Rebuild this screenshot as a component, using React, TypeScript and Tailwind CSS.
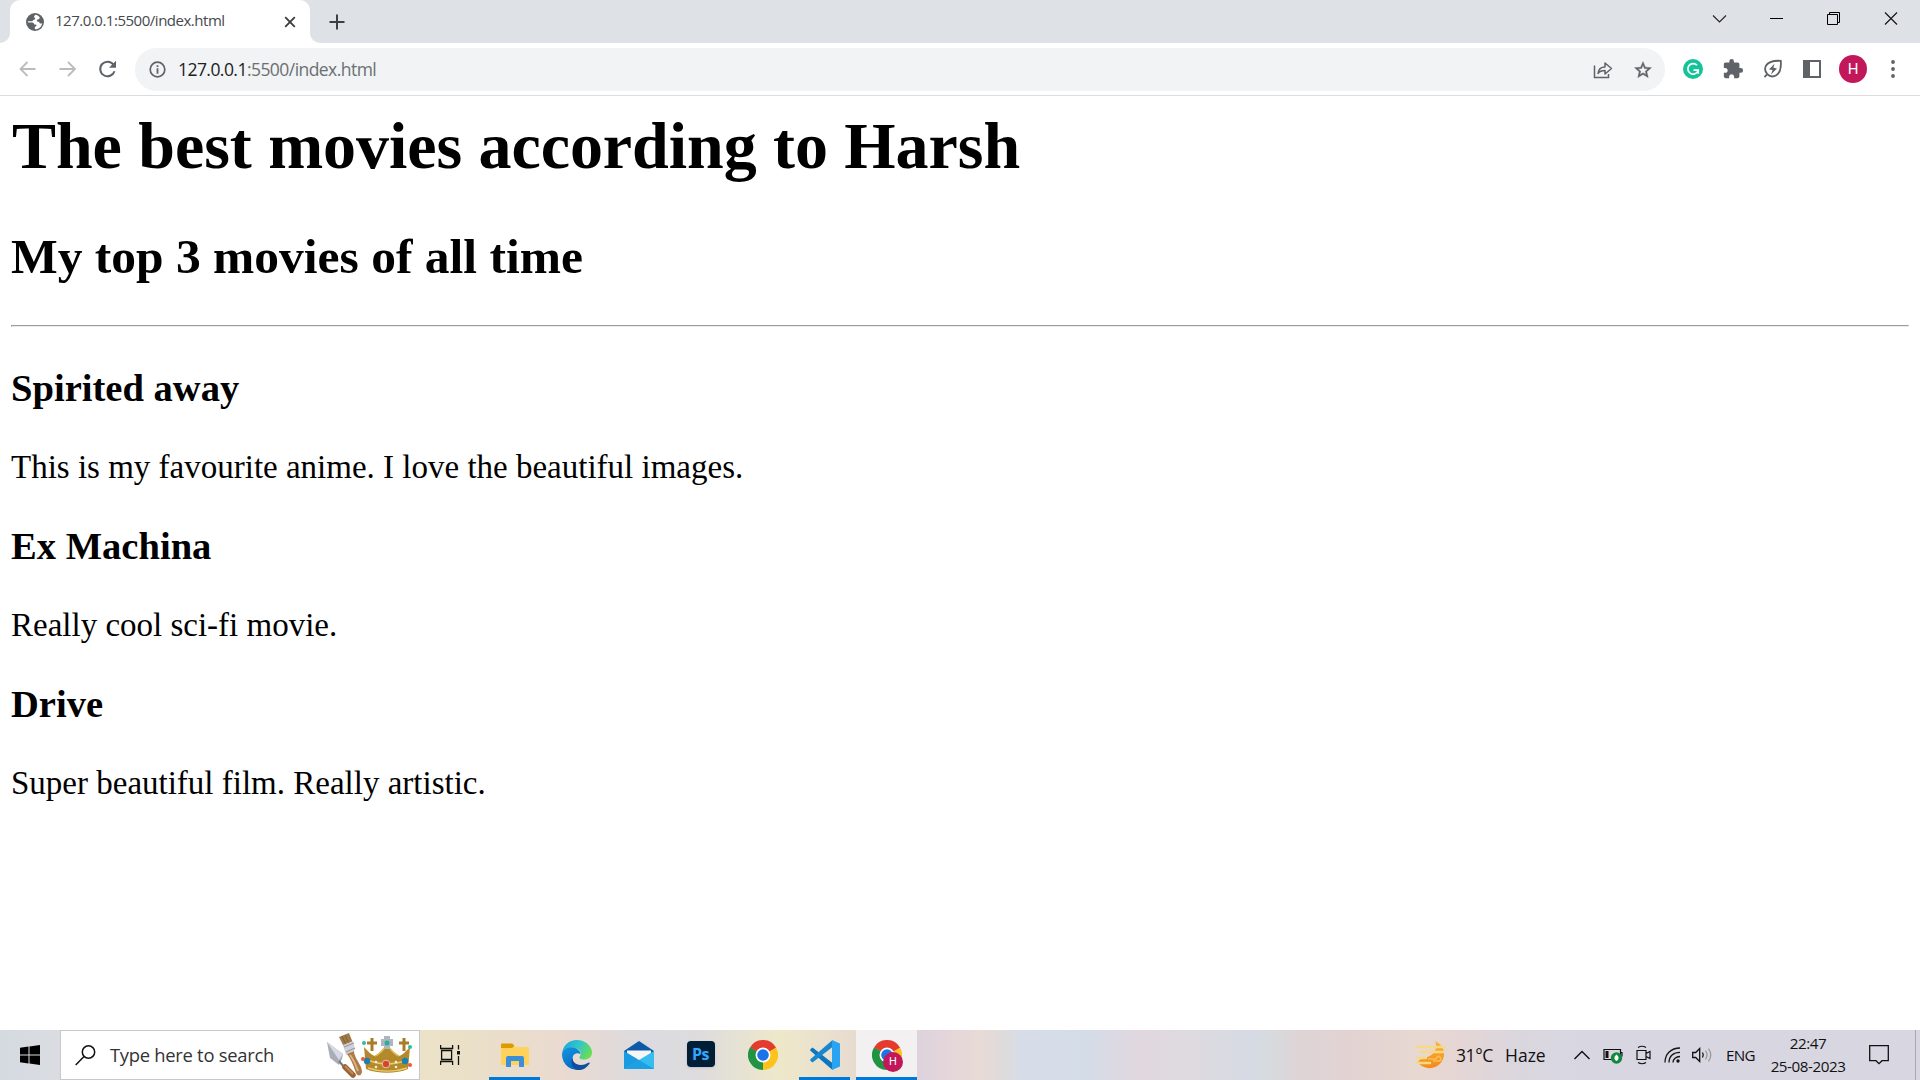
import React from 'react';

const PAGE_FONT = "font-['Liberation_Serif',serif]";

function Globe() {
  return (
    <svg width="18" height="18" viewBox="0 0 18 18">
      <circle cx="9" cy="9" r="9" fill="#5f6368" />
      <path d="M9.6 1.8c-1.7.8-2 2.4-.8 3.1 1 .6.3 1.8-.9 1.8-1 0-.8 1.5-2 1.5H2.2c-.6 0-.7 1 .3 1.2h3.7c1.500 0 1.900 1 1.900 2h1.600c1 0 1 1.600.2 1.900-1.300.5-1.400 2-.7 2.900 3.500.2 6.500-2.500 7-6-1.200.8-2.500.4-2.800-.8-.3-1.100-2.300-.3-2.500-1.600-.2-1.200 1.200-1.600 2-1.900.8-.3 1-1.300.5-2-1-1.200-2.400-2-3.800-2.100z" fill="#fff" />
    </svg>
  );
}

function ChromeIcon() {
  return (
    <svg width="30" height="30" viewBox="0 0 48 48">
      <path d="M24 24 L3.200 12 A24 24 0 0 1 44.800 12 Z" fill="#e33b2e" />
      <path d="M24 24 L44.800 12 A24 24 0 0 1 24 48 Z" fill="#fcc31e" />
      <path d="M24 24 L24 48 A24 24 0 0 1 3.200 12 Z" fill="#229342" />
      <path d="M24 12H44.800L34.400 18Z" fill="#e33b2e" />
      <path d="M34.400 30L24 48L24 36Z" fill="#fcc31e" />
      <path d="M13.600 30L3.200 12L13.600 18Z" fill="#229342" />
      <circle cx="24" cy="24" r="12" fill="#fff" />
      <circle cx="24" cy="24" r="9.300" fill="#1a73e8" />
    </svg>
  );
}

function TabStrip() {
  return (
    <header className="flex h-[43px] items-end bg-[#dee1e6]">
      <div className="h-[43px] w-[10px] bg-white">
        <div className="h-full rounded-br-[10px] bg-[#dee1e6]" />
      </div>
      <div className="flex h-[43px] w-[300px] items-center rounded-t-[10px] bg-white pl-4 pr-[14px]">
        <Globe />
        <span className="ml-[11px] flex-1 whitespace-nowrap pb-[2px] text-[15px] tracking-[-0.480px] text-[#45494d]">127.0.0.1:5500/index.html</span>
        <svg width="12" height="12" viewBox="0 0 12 12" stroke="#3c4043" strokeWidth="1.900"><path d="M1.200 1.200l9.600 9.600M10.800 1.200l-9.600 9.600" /></svg>
      </div>
      <div className="h-[43px] w-[10px] bg-white">
        <div className="h-full rounded-bl-[10px] bg-[#dee1e6]" />
      </div>
      <div className="flex h-[43px] flex-1 items-center pl-[9px]">
        <svg width="16" height="16" viewBox="0 0 16 16" stroke="#3c4043" strokeWidth="2"><path d="M8 .500v15M.500 8h15" /></svg>
      </div>
      <div className="flex h-[43px] items-start">
        <svg width="57" height="37" viewBox="0 0 57 37" fill="none" stroke="#222" strokeWidth="1.100"><path d="M22 15.500l6.500 6.500 6.500-6.500" /></svg>
        <svg width="57" height="37" viewBox="0 0 57 37" stroke="#000" strokeWidth="1"><path d="M22 18.500h13" /></svg>
        <svg width="57" height="37" viewBox="0 0 57 37" fill="none" stroke="#000" strokeWidth="1"><path d="M22.500 14.500h10v10h-10zM24.500 14.500v-2h10v10h-2" /></svg>
        <svg width="58" height="37" viewBox="0 0 58 37" stroke="#111" strokeWidth="1.100"><path d="M23 12.500l12 12M35 12.500l-12 12" /></svg>
      </div>
    </header>
  );
}

function Toolbar() {
  return (
    <div className="flex h-[53px] items-center border-b border-[#dadce0] bg-white pl-[18px]">
      <svg width="20" height="20" viewBox="0 0 20 20" fill="none" stroke="#babcbe" strokeWidth="1.800"><path d="M17.500 10H3M9.500 3L2.500 10l7 7" /></svg>
      <svg className="ml-5" width="20" height="20" viewBox="0 0 20 20" fill="none" stroke="#babcbe" strokeWidth="1.800"><path d="M1.500 10H16M10 3l7 7-7 7" /></svg>
      <svg className="ml-5" width="20" height="20" viewBox="0 0 20 20"><path d="M15.500 5.700A7.300 7.300 0 1 0 16.500 12.200" fill="none" stroke="#5f6368" strokeWidth="2" /><path d="M18 1.800v7h-7z" fill="#5f6368" /></svg>
      <div className="ml-[17px] mt-px flex h-[43px] w-[1530px] items-center rounded-full bg-[#f1f3f4] pl-[14px] pr-[12.500px]">
        <svg width="17" height="17" viewBox="0 0 17 17"><circle cx="8.500" cy="8.500" r="7.300" fill="none" stroke="#5f6368" strokeWidth="1.700" /><path d="M7.600 4.200h1.800v1.800H7.600zM7.600 7.300h1.800v5.500H7.600z" fill="#5f6368" /></svg>
        <span className="ml-[12px] flex-1 whitespace-nowrap text-[17.500px] tracking-[-0.550px] text-[#6b6f73]"><span className="text-[#202124]">127.0.0.1</span>:5500/index.html</span>
        <svg width="20" height="20" viewBox="0 0 20 20" fill="none" stroke="#5f6368" strokeWidth="1.500"><path d="M1.500 5.500v12h14v-3.500" /><path d="M5 13.500c.5-4.500 3-6.500 7-6.500V3l6.500 5.500-6.500 5.500v-3.500c-3.500 0-5.500.8-7 3z" strokeLinejoin="round" /></svg>
        <svg className="ml-5" width="20" height="20" viewBox="0 0 24 24"><path d="M22 9.240l-7.190-.62L12 2 9.190 8.630 2 9.240l5.460 4.730L5.820 21 12 17.270 18.180 21l-1.630-7.030L22 9.240zM12 15.400l-3.760 2.270 1-4.280-3.320-2.880 4.380-.38L12 6.100l1.710 4.040 4.380.38-3.320 2.880 1 4.280L12 15.400z" fill="#5f6368" stroke="#5f6368" strokeWidth=".600" /></svg>
      </div>
      <svg className="ml-[17.500px]" width="20" height="20" viewBox="0 0 20 20"><circle cx="10" cy="10" r="10" fill="#15c39a" /><path d="M14 6.200A5.300 5.300 0 1 0 15 12M10.500 11.200h4.700v3.600" fill="none" stroke="#fff" strokeWidth="1.700" /></svg>
      <svg className="ml-[19px]" width="22" height="22" viewBox="0 0 24 24"><path d="M20.500 11H19V7c0-1.100-.9-2-2-2h-4V3.500a2.500 2.500 0 0 0-5 0V5H4c-1.100 0-1.990.9-1.990 2v3.800H3.500c1.490 0 2.700 1.210 2.700 2.700s-1.210 2.700-2.700 2.700H2V20c0 1.100.9 2 2 2h3.800v-1.500c0-1.490 1.210-2.700 2.700-2.700s2.700 1.210 2.700 2.700V22H17c1.100 0 2-.9 2-2v-4h1.500a2.500 2.500 0 0 0 0-5z" fill="#5f6368" /></svg>
      <svg className="ml-[19px]" width="20" height="20" viewBox="0 0 20 20"><path d="M17.800 1.800c-7-.3-12.800.8-15 5.200-1.300 3-.5 6 1.500 8.200 2.300 2.200 6 2.800 9 1 4.300-2.700 5-8 4.500-14.400zM4.300 15.200L1.500 18" fill="none" stroke="#5f6368" strokeWidth="1.800" /><path d="M11.500 4.800L6 10.500l3.600.6L8 15.500l6-6-3.600-.8z" fill="#5f6368" /></svg>
      <svg className="ml-[20.500px]" width="18" height="18" viewBox="0 0 18 18"><path d="M0 0h18v18H0z" fill="#5f6368" /><path d="M7 2h9v14H7z" fill="#fff" /></svg>
      <div className="ml-[18px] flex h-7 w-7 items-center justify-center rounded-full bg-[#c2185b] font-[Roboto,sans-serif] text-[15px] text-white">H</div>
      <svg className="ml-[23.500px]" width="4" height="18" viewBox="0 0 4 18" fill="#5f6368"><circle cx="2" cy="2" r="1.900" /><circle cx="2" cy="9" r="1.900" /><circle cx="2" cy="16" r="1.900" /></svg>
    </div>
  );
}

const movies = [
  { title: 'Spirited away', note: 'This is my favourite anime. I love the beautiful images.' },
  { title: 'Ex Machina', note: 'Really cool sci-fi movie.' },
  { title: 'Drive', note: 'Super beautiful film. Really artistic.' },
];

function Page() {
  return (
    <main className={`flex-1 bg-white px-[11px] pt-[12px] text-black ${PAGE_FONT}`}>
      <h1 className="pl-px text-[66px] font-bold leading-[76px] tracking-[-0.060px]">The best movies according to Harsh</h1>
      <h2 className="mt-[44px] text-[49.500px] font-bold leading-[57px]">My top 3 movies of all time</h2>
      <hr className="mt-[40px] h-[2px] border border-[#9a9a9a] border-b-[#eeeeee] border-r-[#eeeeee]" />
      {movies.map((m) => (
        <section key={m.title} className="pt-[39px]">
          <h3 className="text-[38.600px] font-bold leading-[44px]">{m.title}</h3>
          <p className="mt-[38px] text-[33px] leading-[37px]">
            <span className="relative top-px">{m.note}</span>
          </p>
        </section>
      ))}
    </main>
  );
}

function SearchArt() {
  return (
    <svg width="88" height="48" viewBox="0 0 88 48">
      <path d="M1 11l3 16 9 7 3-6 1-5z" fill="#a9adb8" /><path d="M1 11l12 18 4-6z" fill="#d7dae2" />
      <path d="M13 30l5 6" stroke="#777" strokeWidth="2" />
      <path d="M19 36l8 8" stroke="#9a6336" strokeWidth="5.500" strokeLinecap="round" /><path d="M19 35l8 8" stroke="#c08a58" strokeWidth="2" />
      <path d="M13 6l10-4 4 10-9 4z" fill="#a17a4c" /><path d="M16 5l4 9M19 4l4 9" stroke="#77552f" strokeWidth=".700" />
      <path d="M17 14l10-4 2 9-9 5z" fill="#cfd0d8" /><path d="M18 16l10-4M20 21l9-4" stroke="#8f919b" />
      <path d="M21 23l7-3c0 7 8 14 8 21-1 5-5 4-6 1-2-6-4-12-9-19z" fill="#ad7a48" /><path d="M24 24c4 5 6 11 8 16" fill="none" stroke="#dcb282" strokeWidth="2" />
      <path d="M40 38L38 16c4 4 7 8 11 9 5-2 9-7 12-12 3 5 7 10 12 12 4-1 7-5 11-9l-2 22c-11 5-31 5-42 0z" fill="#b4892c" />
      <path d="M42 29c12 5 26 5 39 0M42 37c12 4 27 4 39 0" fill="none" stroke="#e8cb6a" strokeWidth="1.500" />
      <path d="M49 25c5-2 9-7 12-12 3 5 7 10 12 12" fill="none" stroke="#dfbd59" strokeWidth="1.500" />
      <path d="M46 7v13M41 12h10M78 7v13M73 12h10" stroke="#a77d25" strokeWidth="3" />
      <path d="M58 5h6v3h3v7h-3v3h-6v-3h-3V8h3z" fill="#b0b5bf" />
      <circle cx="61" cy="12" r="2.500" fill="#24b397" /><circle cx="38" cy="12" r="2" fill="#2bbd9d" /><circle cx="84" cy="16" r="2" fill="#2bbd9d" />
      <circle cx="60" cy="33" r="3.800" fill="#d9432b" stroke="#e5c5a5" /><circle cx="41" cy="30" r="3.200" fill="#1681b5" /><circle cx="79" cy="30" r="3.200" fill="#1681b5" />
      <circle cx="37" cy="28" r="2" fill="#e55c3d" /><circle cx="84" cy="34" r="2" fill="#e55c3d" />
      <g fill="#f3eee0"><circle cx="50" cy="31" r="1.300" /><circle cx="50" cy="36" r="1.300" /><circle cx="70" cy="31" r="1.300" /><circle cx="70" cy="36" r="1.300" /></g>
    </svg>
  );
}

function Slot({ children, active }: { children: React.ReactNode; active?: boolean }) {
  return (
    <div className="flex h-[50px] w-[62px] flex-col items-center">
      <div className="flex h-[47px] items-center justify-center pt-[3px]">{children}</div>
      {active && <div className="h-[3px] w-[51px] bg-[#0078d7]" />}
    </div>
  );
}

function Taskbar() {
  return (
    <footer className="flex h-[50px] items-center bg-[linear-gradient(90deg,#d5dae1_0px,#dadce1_60px,#ece2c8_420px,#eae0c8_470px,#eadad0_560px,#dbdbe0_650px,#dedcdd_700px,#eee8ca_780px,#e8dccf_850px,#ddd3dd_917px,#e4d5da_945px,#e8dad6_980px,#dddbdc_1005px,#d6dde8_1022px,#d4dce8_1085px,#e1d7de_1140px,#dedadf_1185px,#d6dae4_1250px,#d7dadd_1272px,#ded4d6_1300px,#e2d3d2_1350px,#e7d8d2_1420px,#e5d6d5_1460px,#dad6de_1520px,#d8d7e1_1580px,#d8d7e1_1920px)] text-[#111]">
      <div className="flex h-full w-[60px] items-center pl-5">
        <svg width="20" height="20" viewBox="0 0 20 20"><path d="M0 2.800L8.500 1.600V9.500H0zM9.500 1.400L20 0v9.500H9.500zM0 10.500h8.500v8L0 17.300zM9.500 10.500H20V20L9.500 18.600z" /></svg>
      </div>
      <div className="flex h-[50px] w-[360px] items-center border border-[#c7c8ce] bg-white pl-[14px]">
        <svg width="21" height="21" viewBox="0 0 21 21" fill="none" stroke="#111" strokeWidth="1.500"><circle cx="13.500" cy="7" r="6.200" /><path d="M9 11.500L.700 20" /></svg>
        <span className="ml-[14px] w-[216px] whitespace-nowrap text-[18.400px] tracking-[-0.280px] text-[#333]">Type here to search</span>
        <SearchArt />
      </div>
      <div className="flex h-full w-[63.500px] items-center pl-5">
        <svg width="20" height="20" viewBox="0 0 20 20" fill="none" stroke="#111" strokeWidth="1.300"><path d="M.600 0v3.500h12V0M.600 20v-3.500h12V20M1.600 5.500h10v9h-10zM18.500 0v4.500M18.500 11v9" /><path d="M17 6h3v3.500h-3z" fill="#111" stroke="none" /></svg>
      </div>
      <Slot active>
        <svg width="28" height="25" viewBox="0 0 28 25"><path d="M0 1.500Q0 1 1 1h10l3 3H27q1 0 1 1v17H0z" fill="#ffd35b" /><path d="M0 1.500Q0 .500 1 .500h10.500l2 2.500-2.500 2H0z" fill="#e09a00" /><path d="M5 24V15q0-2 2-2h14q2 0 2 2v9h-5v-6h-8v6z" fill="#3a8fd8" /></svg>
      </Slot>
      <Slot>
        <svg width="30" height="30" viewBox="0 0 30 30">
          <defs><linearGradient id="edgeTop" x1="0" y1=".200" x2="1" y2=".600"><stop stopColor="#1ba6dd" /><stop offset=".500" stopColor="#32c6ca" /><stop offset="1" stopColor="#69df4f" /></linearGradient><linearGradient id="edgeLow" x1="0" y1="0" x2=".500" y2="1"><stop stopColor="#1296dd" /><stop offset="1" stopColor="#0868c8" /></linearGradient></defs>
          <path d="M0 14C1 5 7 0 15 0s15 6 15 12.500c0 4.500-3.500 7-8 7-4 0-5.500-1.300-4-3.200 1.800-2.800.5-7.300-5-7.800C7 8 2 10 0 14z" fill="url(#edgeTop)" />
          <path d="M0 15c0-4 4-7.500 9-7.500 6 0 9.500 3.500 9.500 6.500-4-2-8 0-8 5 0 5 4 9 9 10A15 15 0 0 1 0 15z" fill="url(#edgeLow)" />
          <path d="M10.500 17c-.5 4.500 3 8 8 8 4 0 6-1.500 8.500-2.500.8 0 1 .5.500 1.200C24 28.500 20 30.500 15.500 30 10 28 8 22 10.500 17z" fill="#114e9c" />
        </svg>
      </Slot>
      <Slot>
        <svg width="30" height="28" viewBox="0 0 30 28"><path d="M0 10L15 0l15 10v5H0z" fill="#0d5aa7" /><path d="M3 9.500h24v12H3z" fill="#f6f6f6" /><path d="M0 10l15 9v9H0z" fill="#199be0" /><path d="M30 10v18H0z" fill="#35bdf0" /><path d="M15 19l15 9H0z" fill="#1d9fe3" /></svg>
      </Slot>
      <Slot>
        <div className="mb-[2px] flex h-[26px] w-[28px] items-center justify-center rounded-[4px] bg-[#001e36] pb-px font-['Open_Sans',sans-serif] text-[16px] font-bold leading-none tracking-tight text-[#31a8ff] shadow-sm">Ps</div>
      </Slot>
      <Slot><ChromeIcon /></Slot>
      <Slot active>
        <svg width="30" height="30" viewBox="0 0 30 30"><path d="M2.500 7.500L22.500 23v7L.700 11q-1-1 0-2z" fill="#0b77bf" /><path d="M2.500 22.500L22.500 7V0L.700 19q-1 1 0 2z" fill="#1687d0" /><path d="M22 0l8 3.500v23L22 30z" fill="#2aa4f2" /></svg>
      </Slot>
      <div className="ml-[0.500px] flex h-[50px] w-[61px] flex-col items-center bg-[#f3f0f1]">
        <div className="relative flex h-[47px] w-full items-center justify-center pt-[3px]">
          <ChromeIcon />
          <div className="absolute left-[27px] top-[22px] flex h-5 w-5 items-center justify-center rounded-full bg-[#c2185b] font-[Roboto,sans-serif] text-[11px] text-white">H</div>
        </div>
        <div className="h-[3px] w-full bg-[#0078d7]" />
      </div>
      <div className="flex-1" />
      <svg width="30" height="28" viewBox="0 0 30 28"><defs><linearGradient id="haze" x1="0" y1="0" x2="0" y2="1"><stop stopColor="#f9b43c" /><stop offset="1" stopColor="#f28a1c" /></linearGradient></defs><path d="M19 0c8 4 11 11 8 18-3 8-12 11-19 8-3-1-5-3-6-5 2-3 5-5 9-5 5-1 9-6 9-10 0-3 0-4-1-6z" fill="url(#haze)" /><path d="M1 6h28M5 11h22M1 17h9M1 22h13" stroke="#f8d982" strokeWidth="2.500" strokeLinecap="round" /><path d="M12 18h8q2-4 4-2t0 4h-7" fill="none" stroke="#f9bf55" strokeWidth="1.500" /></svg>
      <span className="ml-[10px] w-[49px] whitespace-nowrap text-[17.500px] tracking-[-0.400px]">31°C</span>
      <span className="w-[69px] whitespace-nowrap text-[17.500px]">Haze</span>
      <svg width="16" height="10" viewBox="0 0 16 10" fill="none" stroke="#111" strokeWidth="1.400"><path d="M.500 9L8 1.500 15.500 9" /></svg>
      <svg className="ml-[13px]" width="20" height="18" viewBox="0 0 20 18"><path d="M1 3.500h16.500v10H1zM17.500 6.500H19v4" fill="none" stroke="#111" strokeWidth="1.200" /><path d="M2.500 5h3v7h-3z" fill="#111" /><circle cx="13.500" cy="12" r="5.700" fill="#10893e" /><path d="M13.500 8.500c3 2.500 2.500 5 0 6.500-2.500-1.500-3-4 0-6.500zM13.500 12v4" fill="#fff" /></svg>
      <svg className="ml-[13px]" width="16" height="20" viewBox="0 0 16 20" fill="none" stroke="#111" strokeWidth="1.200"><path d="M1 5.500h9v9H1zM10 8.500l4-2v7L10 11.500M2 2.500Q6 0 10 2.500M2 17.500q4 2.500 8 0" /></svg>
      <svg className="ml-3" width="17" height="17" viewBox="0 0 17 17" fill="none" stroke="#111" strokeWidth="1.300"><path d="M1 15.500C1 7 7 1 16 1M5 15.500C5 9 9.500 5.300 16 5.300M9 15.500c0-3.500 3-6 7-6" /><circle cx="14" cy="14" r="1.700" fill="#111" stroke="none" /></svg>
      <svg className="ml-[11px]" width="21" height="16" viewBox="0 0 21 16" fill="none" stroke="#111" strokeWidth="1.300"><path d="M.700 5.500h3l4-4v13l-4-4h-3z" /><path d="M10.500 5.500q1.500 2.500 0 5" /><path d="M13.500 3.500q3 4.500 0 9M16.500 1.500q4.500 6.500 0 13" stroke="#999" /></svg>
      <span className="ml-[13px] w-[33px] whitespace-nowrap text-[15.200px] tracking-[-0.700px]">ENG</span>
      <div className="ml-[7px] flex w-[84px] flex-col items-center whitespace-nowrap text-[15.200px] leading-[23px] tracking-[-0.450px]">
        <span>22:47</span>
        <span>25-08-2023</span>
      </div>
      <svg className="ml-[19px]" width="20" height="20" viewBox="0 0 20 20" fill="none" stroke="#111" strokeWidth="1.300"><path d="M.700.700h18.600v15H13l-3 3-3-3H.700z" /></svg>
      <div className="ml-[26px] h-full w-[5px] border-l border-[#a9a8b2]" />
    </footer>
  );
}

export default function App() {
  return (
    <div className="flex h-[1080px] w-[1920px] flex-col overflow-hidden bg-white font-['Open_Sans',sans-serif]">
      <TabStrip />
      <Toolbar />
      <Page />
      <Taskbar />
    </div>
  );
}
